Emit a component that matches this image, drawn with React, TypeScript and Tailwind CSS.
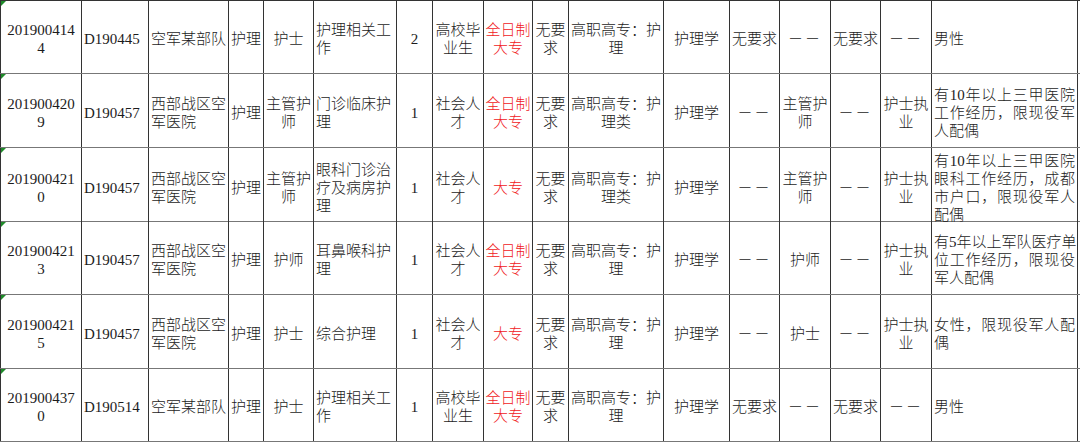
import React from "react";

type Align = "c" | "l" | "j";
type Cell = { lines: string[]; align?: Align; red?: boolean };

// column widths in px (vertical rule sits on the first pixel of each cell)
const cols =
  "grid grid-cols-[81px_67px_80px_35px_50px_83px_36px_51px_49px_36px_95px_66px_50px_51px_50px_51px_147px]";

const rows: { h: string; cells: Cell[] }[] = [
  {
    h: "h-[74px] border-t",
    cells: [
      { lines: ["201900414", "4"] },
      { lines: ["D190445"], align: "l" },
      { lines: ["空军某部队"], align: "l" },
      { lines: ["护理"] },
      { lines: ["护士"] },
      { lines: ["护理相关工", "作"], align: "l" },
      { lines: ["2"] },
      { lines: ["高校毕", "业生"] },
      { lines: ["全日制", "大专"], red: true },
      { lines: ["无要", "求"] },
      { lines: ["高职高专：护", "理"] },
      { lines: ["护理学"] },
      { lines: ["无要求"] },
      { lines: ["－－"] },
      { lines: ["无要求"] },
      { lines: ["－－"] },
      { lines: ["男性"], align: "j" },
    ],
  },
  {
    h: "h-[74px]",
    cells: [
      { lines: ["201900420", "9"] },
      { lines: ["D190457"], align: "l" },
      { lines: ["西部战区空", "军医院"], align: "l" },
      { lines: ["护理"] },
      { lines: ["主管护", "师"] },
      { lines: ["门诊临床护", "理"], align: "l" },
      { lines: ["1"] },
      { lines: ["社会人", "才"] },
      { lines: ["全日制", "大专"], red: true },
      { lines: ["无要", "求"] },
      { lines: ["高职高专：护", "理类"] },
      { lines: ["护理学"] },
      { lines: ["－－"] },
      { lines: ["主管护", "师"] },
      { lines: ["－－"] },
      { lines: ["护士执", "业"] },
      { lines: ["有10年以上三甲医院", "工作经历，限现役军", "人配偶"], align: "j" },
    ],
  },
  {
    h: "h-[74px]",
    cells: [
      { lines: ["201900421", "0"] },
      { lines: ["D190457"], align: "l" },
      { lines: ["西部战区空", "军医院"], align: "l" },
      { lines: ["护理"] },
      { lines: ["主管护", "师"] },
      { lines: ["眼科门诊治", "疗及病房护", "理"], align: "l" },
      { lines: ["1"] },
      { lines: ["社会人", "才"] },
      { lines: ["大专"], red: true },
      { lines: ["无要", "求"] },
      { lines: ["高职高专：护", "理类"] },
      { lines: ["护理学"] },
      { lines: ["－－"] },
      { lines: ["主管护", "师"] },
      { lines: ["－－"] },
      { lines: ["护士执", "业"] },
      {
        lines: ["有10年以上三甲医院", "眼科工作经历，成都", "市户口，限现役军人", "配偶"],
        align: "j",
      },
    ],
  },
  {
    h: "h-[73px]",
    cells: [
      { lines: ["201900421", "3"] },
      { lines: ["D190457"], align: "l" },
      { lines: ["西部战区空", "军医院"], align: "l" },
      { lines: ["护理"] },
      { lines: ["护师"] },
      { lines: ["耳鼻喉科护", "理"], align: "l" },
      { lines: ["1"] },
      { lines: ["社会人", "才"] },
      { lines: ["全日制", "大专"], red: true },
      { lines: ["无要", "求"] },
      { lines: ["高职高专：护", "理"] },
      { lines: ["护理学"] },
      { lines: ["－－"] },
      { lines: ["护师"] },
      { lines: ["－－"] },
      { lines: ["护士执", "业"] },
      { lines: ["有5年以上军队医疗单", "位工作经历，限现役", "军人配偶"], align: "j" },
    ],
  },
  {
    h: "h-[74px]",
    cells: [
      { lines: ["201900421", "5"] },
      { lines: ["D190457"], align: "l" },
      { lines: ["西部战区空", "军医院"], align: "l" },
      { lines: ["护理"] },
      { lines: ["护士"] },
      { lines: ["综合护理"], align: "l" },
      { lines: ["1"] },
      { lines: ["社会人", "才"] },
      { lines: ["大专"], red: true },
      { lines: ["无要", "求"] },
      { lines: ["高职高专：护", "理"] },
      { lines: ["护理学"] },
      { lines: ["－－"] },
      { lines: ["护士"] },
      { lines: ["－－"] },
      { lines: ["护士执", "业"] },
      { lines: ["女性，限现役军人配", "偶"], align: "j" },
    ],
  },
  {
    h: "h-[73px]",
    cells: [
      { lines: ["201900437", "0"] },
      { lines: ["D190514"], align: "l" },
      { lines: ["空军某部队"], align: "l" },
      { lines: ["护理"] },
      { lines: ["护士"] },
      { lines: ["护理相关工", "作"], align: "l" },
      { lines: ["1"] },
      { lines: ["高校毕", "业生"] },
      { lines: ["全日制", "大专"], red: true },
      { lines: ["无要", "求"] },
      { lines: ["高职高专：护", "理"] },
      { lines: ["护理学"] },
      { lines: ["无要求"] },
      { lines: ["－－"] },
      { lines: ["无要求"] },
      { lines: ["－－"] },
      { lines: ["男性"], align: "j" },
    ],
  },
];

function TableCell({ cell, first, last }: { cell: Cell; first: boolean; last: boolean }) {
  const align = cell.align ?? "c";
  return (
    <div
      className={
        "relative flex flex-col justify-center border-l border-[#333] pt-[4px] " +
        (last ? "border-r " : "") +
        (align === "c" ? "items-center px-0 " : "items-stretch px-[2px] ") +
        (cell.red ? "text-[#f0201c]" : "text-[#1c1c1c]")
      }
    >
      {first && (
        <span className="absolute left-0 top-0 h-0 w-0 border-t-[5px] border-r-[5px] border-t-[#1f8a2a] border-r-transparent" />
      )}
      {cell.lines.map((line, i) => {
        const justify = align === "j" && i < cell.lines.length - 1;
        const dashes = line === "－－";
        return (
          <div
            key={i}
            className={
              "whitespace-nowrap " +
              (align === "c" ? "text-center" : "text-left") +
              (justify ? " text-justify [text-align-last:justify]" : "") +
              (dashes ? " tracking-[2px]" : "")
            }
          >
            {line}
          </div>
        );
      })}
    </div>
  );
}

export default function App() {
  return (
    <div className="h-[442px] w-[1080px] overflow-hidden bg-white font-['Liberation_Serif','Noto_Sans_CJK_SC',serif] text-[15px] font-light leading-[18px]">
      {rows.map((row, r) => (
        <div key={r} className={cols + " border-b border-[#777] " + row.h + (r === 0 ? " border-t-[#333]" : "")}>
          {row.cells.map((c, i) => (
            <TableCell key={i} cell={c} first={i === 0} last={i === row.cells.length - 1} />
          ))}
        </div>
      ))}
    </div>
  );
}
